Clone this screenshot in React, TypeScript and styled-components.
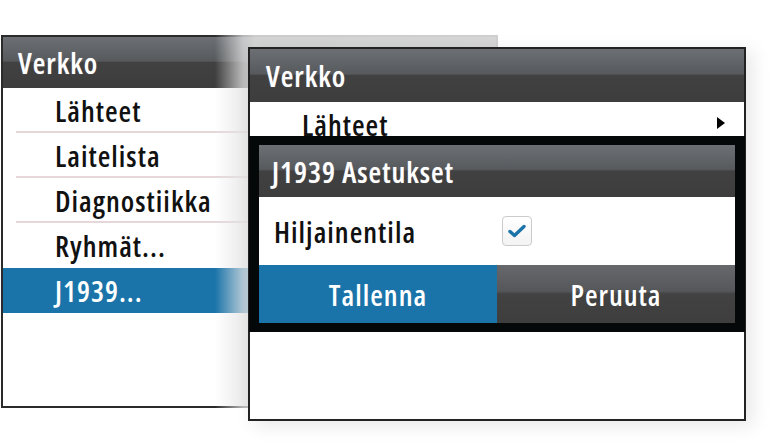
import React from "react";
import styled, { createGlobalStyle } from "styled-components";

const Global = createGlobalStyle`
  html, body { margin: 0; padding: 0; background: #ffffff; }
  body {
    font-family: "Open Sans", "DejaVu Sans", sans-serif;
    font-stretch: 75%;
    font-weight: 600;
    letter-spacing: 1px;
  }
`;

const Desktop = styled.div`
  position: relative;
  width: 770px;
  height: 446px;
  background: #ffffff;
  overflow: hidden;
`;

const Window = styled.div<{ $left: number; $top: number; $w: number; $h: number }>`
  position: absolute;
  left: ${(p) => p.$left}px;
  top: ${(p) => p.$top}px;
  width: ${(p) => p.$w}px;
  height: ${(p) => p.$h}px;
  box-sizing: border-box;
  border: 2px solid #2b2b2b;
  background: #ffffff;
  display: flex;
  flex-direction: column;
`;

const BackWindow = styled(Window)`
  &::after {
    content: "";
    position: absolute;
    top: -2px;
    bottom: -2px;
    left: 212px;
    right: -2px;
    background: linear-gradient(
      to right,
      rgba(232, 232, 232, 0) 0px,
      rgba(228, 228, 228, 0.75) 28px,
      rgba(226, 226, 226, 0.88) 40px,
      rgba(226, 226, 226, 0.9) 100%
    );
    pointer-events: none;
  }
`;

const FrontWindow = styled(Window)`
  border-color: #222;
  box-shadow: 6px 4px 18px rgba(0, 0, 0, 0.1);
`;

const Header = styled.div<{ $h: number; $pad: number }>`
  flex: none;
  height: ${(p) => p.$h}px;
  padding-left: ${(p) => p.$pad}px;
  display: flex;
  align-items: center;
  color: #ffffff;
  font-size: 29px;
  background: linear-gradient(
    to bottom,
    #6c7074 0%,
    #575a5d 47%,
    #414141 50%,
    #3d3d3d 100%
  );
  text-shadow: 0 0 1px rgba(255, 255, 255, 0.4);
`;

const Row = styled.div<{ $selected?: boolean; $sep?: boolean }>`
  position: relative;
  flex: none;
  height: 45px;
  box-sizing: border-box;
  padding-left: 52px;
  padding-right: 19px;
  display: flex;
  align-items: center;
  justify-content: space-between;
  font-size: 29px;
  color: ${(p) => (p.$selected ? "#ffffff" : "#111111")};
  background: ${(p) => (p.$selected ? "#1b74a9" : "transparent")};
  &::after {
    content: "";
    display: ${(p) => (p.$sep ? "block" : "none")};
    position: absolute;
    left: 13px;
    right: 0;
    bottom: 0;
    height: 2px;
    background: linear-gradient(to bottom, #e9d3d7, #e2dcdc);
  }
`;

const Label = styled.span`
  line-height: 1;
`;

const Arrow = styled.span`
  width: 0;
  height: 0;
  border-top: 6.5px solid transparent;
  border-bottom: 6.5px solid transparent;
  border-left: 8px solid #000;
  margin-top: -4px;
`;

const Dialog = styled.div`
  position: absolute;
  left: -1px;
  right: -1px;
  top: 87px;
  box-sizing: border-box;
  padding: 9px 10px;
  background: #050808;
  display: flex;
  flex-direction: column;
`;

const OptionRow = styled.div`
  height: 68px;
  background: #ffffff;
  display: flex;
  align-items: center;
  padding-left: 15px;
  font-size: 29px;
  color: #111;
`;

const OptionLabel = styled.span`
  width: 228px;
  line-height: 1;
`;

const Checkbox = styled.span`
  width: 30px;
  height: 30px;
  box-sizing: border-box;
  border: 1.5px solid #c9cbcd;
  border-radius: 4px;
  background: linear-gradient(#ffffff, #f3f3f3);
  display: flex;
  align-items: center;
  justify-content: center;
`;

const Buttons = styled.div`
  display: grid;
  grid-template-columns: 1fr 1fr;
  height: 58px;
`;

const Button = styled.div<{ $primary?: boolean }>`
  display: flex;
  align-items: center;
  justify-content: center;
  font-size: 29px;
  color: #ffffff;
  background: ${(p) =>
    p.$primary
      ? "#1b74a9"
      : "linear-gradient(to bottom, #66686b 0%, #55575a 45%, #424242 50%, #3e3e3e 100%)"};
`;

export default function App() {
  return (
    <Desktop>
      <Global />
      <BackWindow $left={1} $top={35} $w={497} $h={373}>
        <Header $h={51} $pad={15}>Verkko</Header>
        <Row $sep>
          <Label>Lähteet</Label>
        </Row>
        <Row $sep>
          <Label>Laitelista</Label>
        </Row>
        <Row $sep>
          <Label>Diagnostiikka</Label>
        </Row>
        <Row>
          <Label>Ryhmät...</Label>
        </Row>
        <Row $selected>
          <Label>J1939...</Label>
        </Row>
      </BackWindow>
      <FrontWindow $left={248} $top={47} $w={498} $h={374}>
        <Header $h={53} $pad={16}>Verkko</Header>
        <Row>
          <Label>Lähteet</Label>
          <Arrow />
        </Row>
        <Dialog>
          <Header $h={52} $pad={13}>J1939 Asetukset</Header>
          <OptionRow>
            <OptionLabel>Hiljainentila</OptionLabel>
            <Checkbox>
              <svg width="18" height="14" viewBox="0 0 18 14">
                <path
                  d="M2 7.5 L6.5 11.5 L16 2.5"
                  fill="none"
                  stroke="#1b74a9"
                  strokeWidth="3.4"
                  strokeLinecap="round"
                  strokeLinejoin="round"
                />
              </svg>
            </Checkbox>
          </OptionRow>
          <Buttons>
            <Button $primary>Tallenna</Button>
            <Button>Peruuta</Button>
          </Buttons>
        </Dialog>
      </FrontWindow>
    </Desktop>
  );
}
